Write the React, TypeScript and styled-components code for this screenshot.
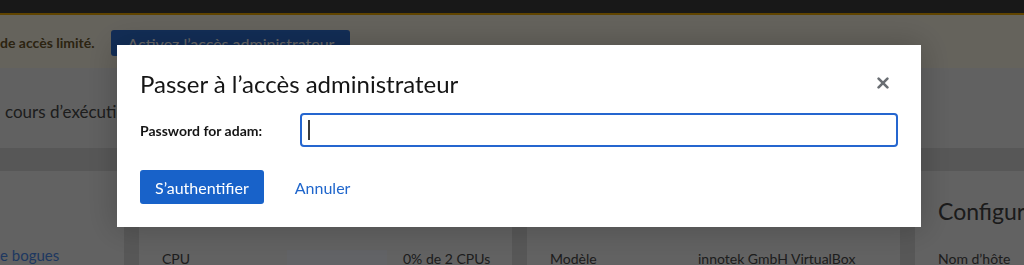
import React from "react";
import styled, { createGlobalStyle } from "styled-components";

const GlobalStyle = createGlobalStyle`
  html, body { margin: 0; padding: 0; }
  body {
    font-family: "Lato", "Liberation Sans", sans-serif;
    color: #505050;
    background: #dadada;
    overflow: hidden;
    width: 1024px;
    height: 265px;
  }
`;

/* ---------- Background page ---------- */

const Page = styled.div`
  display: flex;
  flex-direction: column;
  height: 265px;
  overflow: hidden;
`;

const Masthead = styled.header`
  height: 13px;
  flex: none;
  background: #3c3c3c;
`;

const LimitedAlert = styled.div`
  flex: none;
  height: 52px;
  border-top: 2px solid #f0ab00;
  background: #fdf7e7;
  display: flex;
  align-items: center;
  gap: 17px;
  padding-top: 1px;
`;

const AlertText = styled.span`
  font-size: 14px;
  font-weight: 700;
  color: #6e5a2e;
  white-space: nowrap;
`;

const AlertButton = styled.button`
  height: 26px;
  padding: 0 16px;
  border: 0;
  border-radius: 3px;
  background: #2f72d8;
  color: #ffffff;
  font-family: inherit;
  font-size: 16px;
  white-space: nowrap;
  margin-top: 2px;
`;

const HeaderSection = styled.section`
  flex: none;
  height: 80px;
  background: #f2f2f2;
  display: flex;
  align-items: center;
  padding: 6px 0 0 5px;
  box-sizing: border-box;
`;

const HeaderText = styled.span`
  font-size: 17px;
  color: #4a4a4a;
  white-space: nowrap;
`;

const Band = styled.div`
  flex: none;
  height: 23px;
`;

const CardGrid = styled.div`
  display: grid;
  grid-template-columns: 124px 373px 373px 1fr;
  column-gap: 15px;
  flex: none;
  height: 220px;
`;

const Card = styled.article<{ $bleed?: boolean }>`
  background: #f4f4f4;
  padding: 24px 0 0 ${(p) => (p.$bleed ? "0" : "23px")};
  box-sizing: border-box;
  overflow: hidden;
  white-space: nowrap;
`;

const CardTitle = styled.h2`
  margin: 0;
  font-size: 23px;
  line-height: 32px;
  font-weight: 400;
  color: #454545;
`;

const InfoList = styled.dl<{ $label: number }>`
  margin: 22px 0 0;
  display: grid;
  grid-template-columns: ${(p) => p.$label}px auto 1fr;
  align-items: center;
  column-gap: 16px;
  font-size: 14px;
  line-height: 20px;
`;

const InfoLabel = styled.dt`
  color: #4a4a4a;
`;

const InfoValue = styled.dd`
  margin: 0;
  color: #4a4a4a;
`;

const ProgressTrack = styled.div`
  width: 100px;
  height: 18px;
  background: #f5f8ff;
`;

const LinkList = styled.ul`
  list-style: none;
  margin: 50px 0 0;
  padding: 0;
`;

const CardLink = styled.li`
  font-size: 15px;
  line-height: 20px;
  color: #4d8cf0;
`;

/* ---------- Modal ---------- */

const Backdrop = styled.div`
  position: fixed;
  inset: 0;
  background: rgba(0, 0, 0, 0.6);
  display: flex;
  align-items: flex-start;
  padding: 45px 0 0 117px;
`;

const Modal = styled.div`
  width: 804px;
  box-sizing: border-box;
  background: #ffffff;
  padding: 24px 23px 23px 23px;
  box-shadow: 0 0 30px 4px rgba(0, 0, 0, 0.18);
  display: flex;
  flex-direction: column;
`;

const ModalHeader = styled.div`
  display: flex;
  align-items: center;
  justify-content: space-between;
`;

const ModalTitle = styled.h1`
  margin: 0;
  font-size: 24px;
  line-height: 29px;
  font-weight: 400;
  color: #151515;
`;

const CloseButton = styled.button`
  width: 30px;
  height: 30px;
  border: 0;
  padding: 0;
  background: transparent;
  display: flex;
  align-items: center;
  justify-content: center;
  color: #6a6e73;
  margin-top: -1px;
`;

const FormRow = styled.div`
  display: grid;
  grid-template-columns: 160px 1fr;
  align-items: center;
  margin-top: 15px;
`;

const Label = styled.label`
  font-size: 14px;
  font-weight: 700;
  color: #151515;
`;

const InputWrap = styled.div`
  position: relative;
`;

const PasswordInput = styled.input`
  display: block;
  width: 100%;
  box-sizing: border-box;
  height: 34px;
  border: 2px solid #2566cf;
  border-radius: 4px;
  outline: none;
  padding: 0 8px;
  font-family: inherit;
  font-size: 16px;
  background: #fff;
  caret-color: transparent;
`;

const Caret = styled.span`
  position: absolute;
  left: 8px;
  top: 7px;
  width: 1.5px;
  height: 20px;
  background: #3a3a3a;
`;

const Footer = styled.div`
  display: flex;
  align-items: center;
  gap: 15px;
  margin-top: 23px;
`;

const PrimaryButton = styled.button`
  height: 34px;
  padding: 0 15px;
  border: 0;
  border-radius: 3px;
  background: #1862c9;
  color: #ffffff;
  font-family: inherit;
  font-size: 16px;
  white-space: nowrap;
`;

const LinkButton = styled.button`
  height: 34px;
  padding: 0 16px;
  border: 0;
  background: transparent;
  color: #1f66cc;
  font-family: inherit;
  font-size: 16px;
`;

function TimesIcon() {
  return (
    <svg width="12" height="12" viewBox="0 0 12 12" aria-hidden="true">
      <path
        d="M1.6 1.6 L10.4 10.4 M10.4 1.6 L1.6 10.4"
        stroke="currentColor"
        strokeWidth="2.6"
        strokeLinecap="round"
        fill="none"
      />
    </svg>
  );
}

export default function App() {
  return (
    <>
      <GlobalStyle />
      <Page>
        <Masthead />
        <LimitedAlert>
          <AlertText>de accès limité.</AlertText>
          <AlertButton type="button">Activez l’accès administrateur</AlertButton>
        </LimitedAlert>
        <HeaderSection>
          <HeaderText>cours d’exécution depuis 2 heures</HeaderText>
        </HeaderSection>
        <Band />
        <CardGrid>
          <Card $bleed>
            <LinkList>
              <CardLink>e bogues</CardLink>
            </LinkList>
          </Card>
          <Card>
            <CardTitle>Utilisation</CardTitle>
            <InfoList $label={109}>
              <InfoLabel>CPU</InfoLabel>
              <ProgressTrack />
              <InfoValue>0% de 2 CPUs</InfoValue>
            </InfoList>
          </Card>
          <Card>
            <CardTitle>Informations système</CardTitle>
            <InfoList $label={132}>
              <InfoLabel>Modèle</InfoLabel>
              <InfoValue>innotek GmbH VirtualBox</InfoValue>
              <span />
            </InfoList>
          </Card>
          <Card>
            <CardTitle>Configuration</CardTitle>
            <InfoList $label={120}>
              <InfoLabel>Nom d’hôte</InfoLabel>
              <InfoValue>localhost</InfoValue>
              <span />
            </InfoList>
          </Card>
        </CardGrid>
      </Page>

      <Backdrop>
        <Modal role="dialog" aria-labelledby="title">
          <ModalHeader>
            <ModalTitle id="title">Passer à l’accès administrateur</ModalTitle>
            <CloseButton type="button" aria-label="Fermer">
              <TimesIcon />
            </CloseButton>
          </ModalHeader>
          <FormRow>
            <Label htmlFor="pw">Password for adam:</Label>
            <InputWrap>
              <PasswordInput id="pw" type="password" />
              <Caret />
            </InputWrap>
          </FormRow>
          <Footer>
            <PrimaryButton type="button">S’authentifier</PrimaryButton>
            <LinkButton type="button">Annuler</LinkButton>
          </Footer>
        </Modal>
      </Backdrop>
    </>
  );
}
